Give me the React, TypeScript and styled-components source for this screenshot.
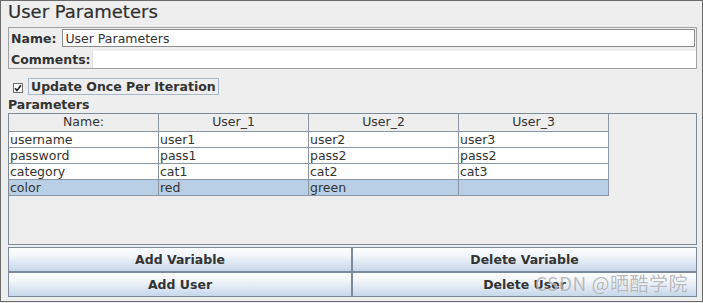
import styled, { createGlobalStyle } from 'styled-components'

const GlobalStyle = createGlobalStyle`
  html, body {
    margin: 0;
    padding: 0;
    background: #eeeeee;
  }
  * {
    box-sizing: border-box;
  }
`

const columns = ['Name:', 'User_1', 'User_2', 'User_3']

const rows = [
  ['username', 'user1', 'user2', 'user3'],
  ['password', 'pass1', 'pass2', 'pass2'],
  ['category', 'cat1', 'cat2', 'cat3'],
  ['color', 'red', 'green', '']
]

const selectedRow = 3

const App = () => {
  return (
    <>
      <GlobalStyle />
      <Frame>
        <Title>User Parameters</Title>
        <NamePanel>
          <FieldRow gap={6}>
            <FieldLabel>Name:</FieldLabel>
            <TextField value="User Parameters" readOnly />
          </FieldRow>
          <FieldRow gap={1}>
            <FieldLabel>Comments:</FieldLabel>
            <CommentField value="" readOnly />
          </FieldRow>
        </NamePanel>

        <CheckRow>
          <CheckBox>
            <svg width="8" height="8" viewBox="0 0 8 8">
              <path d="M1 4.2 L3 6.4 L7 1.2" fill="none" stroke="#222" strokeWidth="1.6" />
            </svg>
          </CheckBox>
          <CheckLabel>Update Once Per Iteration</CheckLabel>
        </CheckRow>

        <SectionLabel>Parameters</SectionLabel>

        <ScrollPane>
          <Grid>
            {columns.map(c => (
              <HeaderCell key={c}>{c}</HeaderCell>
            ))}
            {rows.map((r, i) =>
              r.map((v, j) => (
                <Cell key={`${i}-${j}`} selected={i === selectedRow}>
                  {v}
                </Cell>
              ))
            )}
          </Grid>
        </ScrollPane>

        <ButtonGrid>
          <Button>Add Variable</Button>
          <Button>Delete Variable</Button>
          <Button>Add User</Button>
          <Button>Delete User</Button>
        </ButtonGrid>

        <Watermark>CSDN @晒酷学院</Watermark>
      </Frame>
    </>
  )
}

const Frame = styled.div`
  position: relative;
  width: 703px;
  height: 302px;
  border: 1px solid #6a6a6a;
  padding: 0 5px 0 7px;
  background: #eeeeee;
  font-family: 'DejaVu Sans', Verdana, sans-serif;
  color: #333333;
  display: flex;
  flex-direction: column;
  overflow: hidden;
`

const Title = styled.div`
  height: 26px;
  font-size: 18px;
  line-height: 22px;
  color: #303030;
  -webkit-text-stroke: 0.2px #303030;
`

const NamePanel = styled.div`
  border: 1px solid #a2a2a2;
  padding: 1px 0 0 2px;
  display: flex;
  flex-direction: column;
  gap: 4px;
`

const FieldRow = styled.div<{ gap: number }>`
  display: flex;
  align-items: center;
  gap: ${p => p.gap}px;
  height: 18px;
  &:last-child {
    height: 17px;
  }
`

const FieldLabel = styled.span`
  font-weight: bold;
  font-size: 12.5px;
  color: #333333;
  white-space: nowrap;
`

const TextField = styled.input`
  flex: 1;
  height: 18px;
  margin-right: 1px;
  border: 1px solid #8c8c8c;
  background: #ffffff;
  font-family: 'DejaVu Sans', Verdana, sans-serif;
  font-size: 12.5px;
  color: #333333;
  padding: 0 2px;
  outline: none;
`

const CommentField = styled(TextField)`
  height: 17px;
  margin-right: 0;
  border: none;
  border-left: 1px solid #e2e2e2;
`

const CheckRow = styled.div`
  display: flex;
  align-items: center;
  margin-top: 9px;
  height: 17px;
  padding-left: 5px;
  gap: 5px;
`

const CheckBox = styled.span`
  width: 10px;
  height: 10px;
  border: 1px solid #6f6f6f;
  background: #ffffff;
  display: flex;
  align-items: center;
  justify-content: center;
  margin-top: 2px;
`

const CheckLabel = styled.span`
  font-weight: bold;
  font-size: 12.5px;
  line-height: 15px;
  padding: 0 2px;
  border: 1px solid #a6b9cc;
  color: #333333;
`

const SectionLabel = styled.div`
  font-weight: bold;
  font-size: 12.5px;
  height: 17px;
  line-height: 17px;
  margin-top: 1px;
  color: #333333;
`

const ScrollPane = styled.div`
  height: 132px;
  border: 1px solid #7d8a97;
  background: #eeeeee;
`

const Grid = styled.div`
  display: grid;
  grid-template-columns: repeat(4, 150px);
  grid-auto-rows: 16px;
  grid-template-rows: 18px;
  font-size: 12.5px;
`

const HeaderCell = styled.div`
  border-right: 1px solid #8a96a3;
  border-bottom: 1px solid #8a96a3;
  background: #eeeeee;
  text-align: center;
  line-height: 16px;
  color: #333333;
`

const Cell = styled.div<{ selected?: boolean }>`
  border-right: 1px solid #8a96a3;
  border-bottom: 1px solid #8a96a3;
  background: ${p => (p.selected ? '#b8cfe5' : '#ffffff')};
  line-height: 15px;
  padding-left: 1px;
  color: #333333;
  white-space: nowrap;
`

const ButtonGrid = styled.div`
  display: grid;
  grid-template-columns: 344px 345px;
  grid-template-rows: 25px 25px;
  margin-top: 2px;
`

const Button = styled.div`
  border: 1px solid #7b8998;
  background: linear-gradient(to bottom, #fcfdfe 0%, #f1f5fa 35%, #c6d7ea 100%);
  font-weight: bold;
  font-size: 12.5px;
  color: #333333;
  display: flex;
  align-items: center;
  justify-content: center;
`

const Watermark = styled.div`
  position: absolute;
  right: 14px;
  bottom: 5px;
  font-family: 'Noto Sans CJK SC', 'DejaVu Sans', sans-serif;
  font-size: 19px;
  color: rgba(130, 130, 130, 0.55);
  text-shadow: 0 0 1px rgba(255, 255, 255, 0.8);
  pointer-events: none;
  letter-spacing: 0.5px;
`

export default App
